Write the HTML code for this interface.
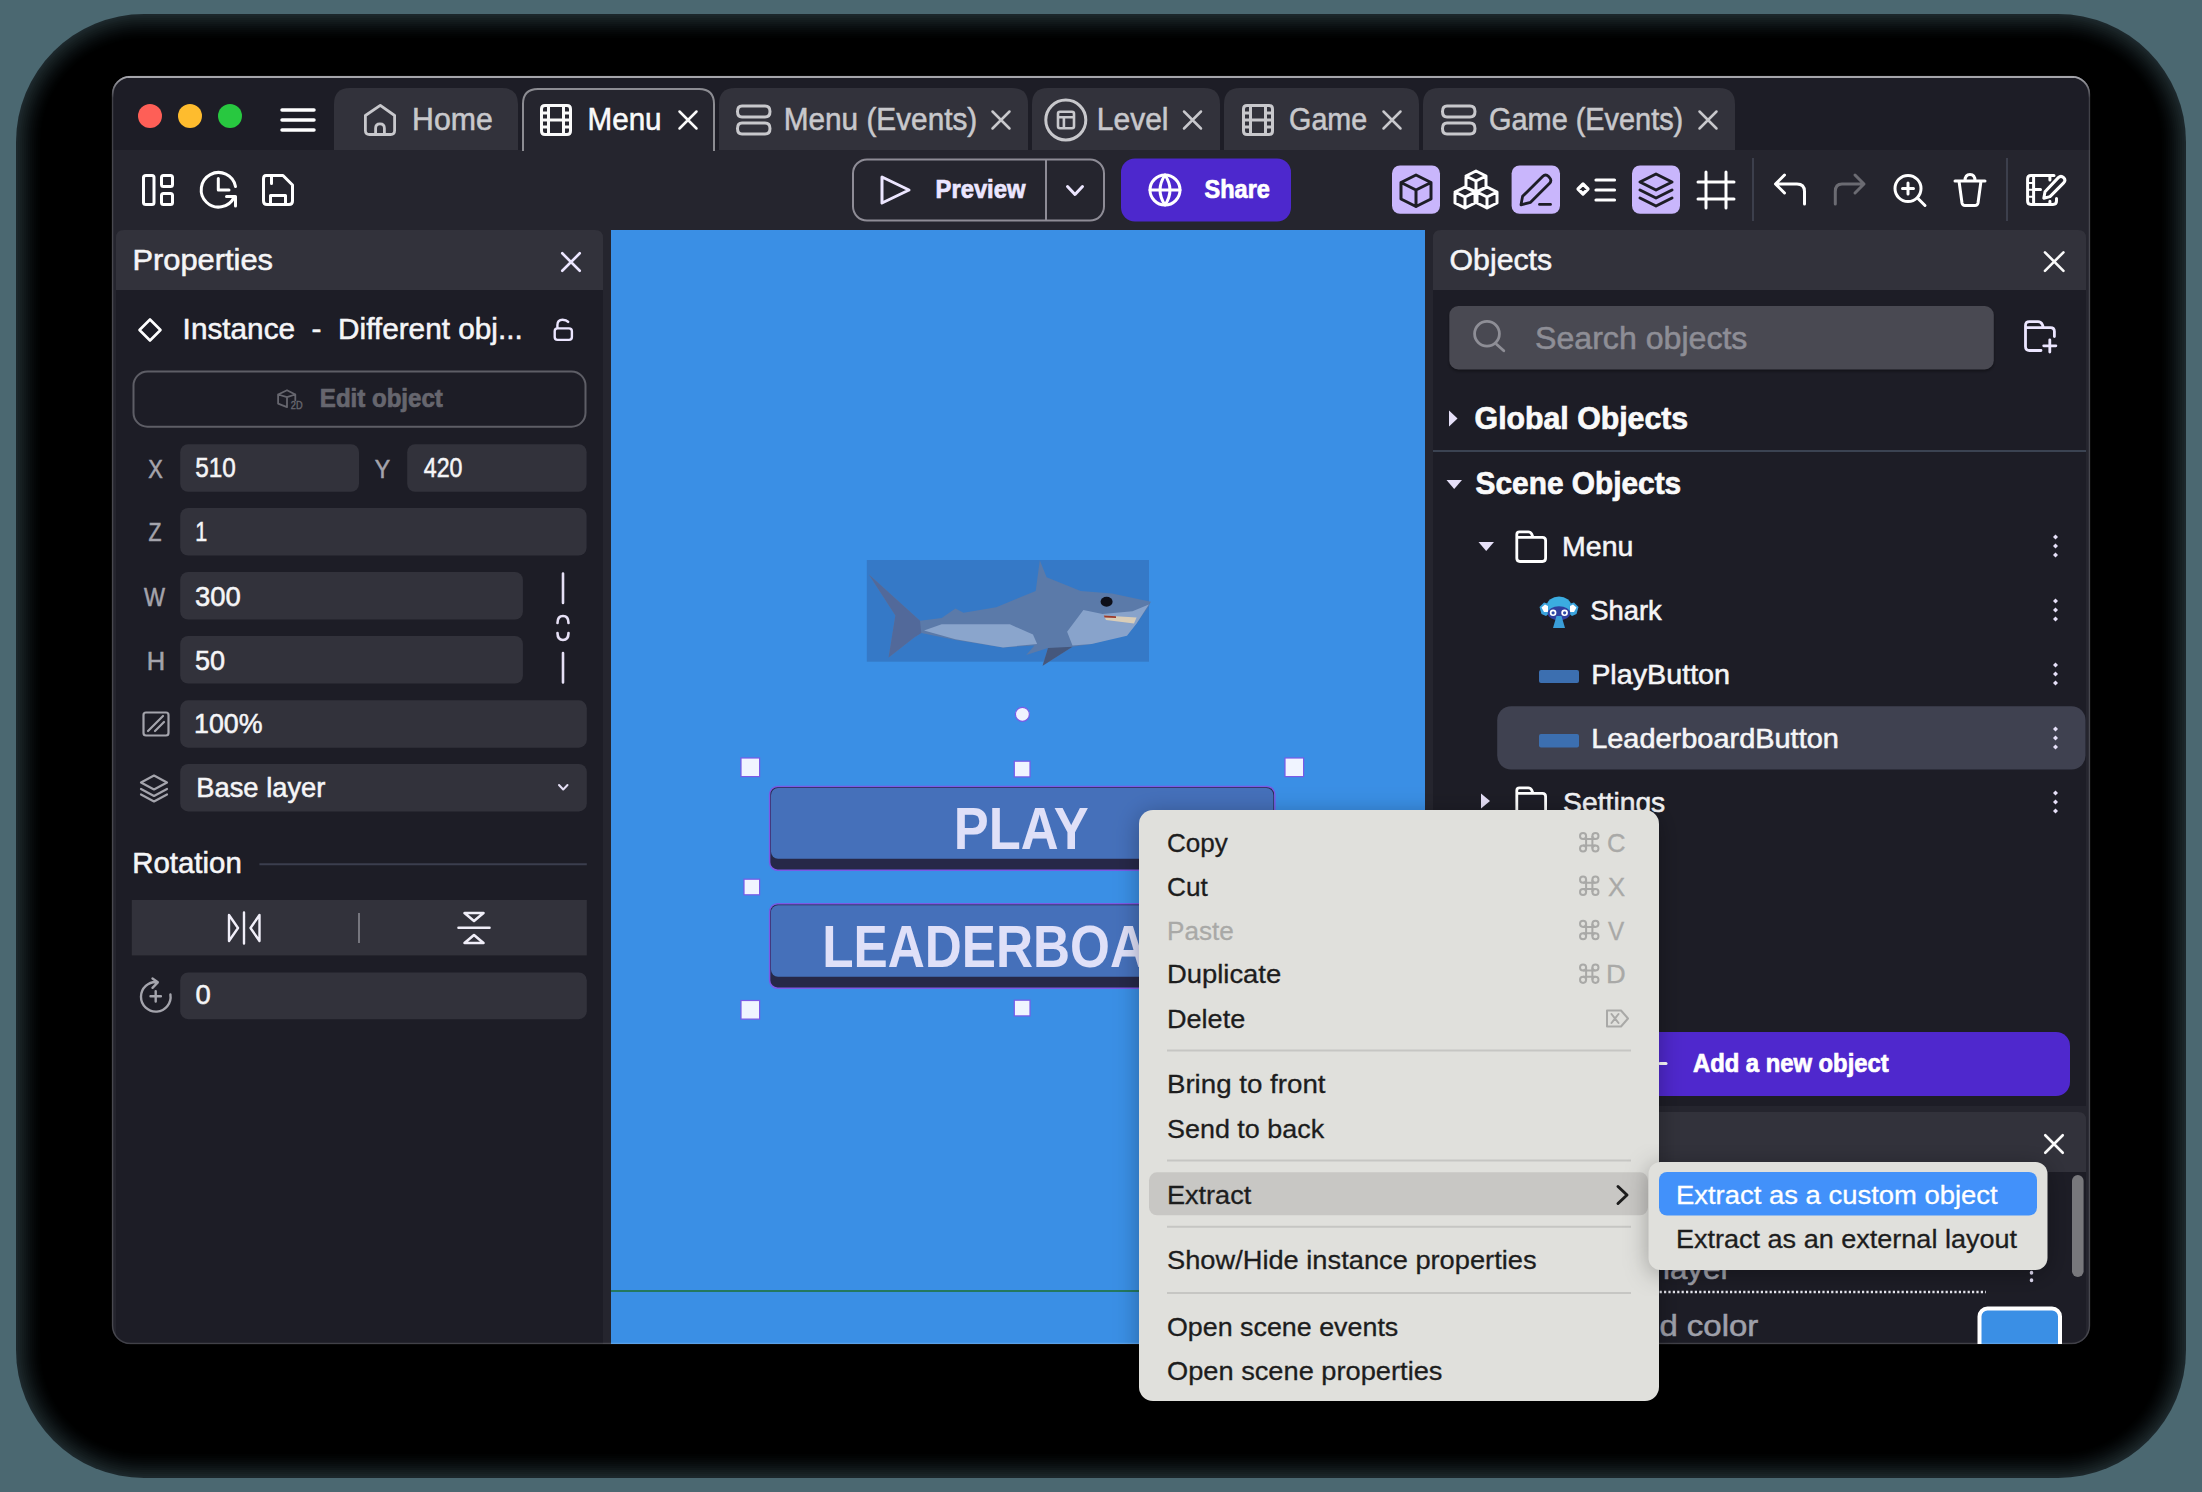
<!DOCTYPE html>
<html><head><meta charset="utf-8"><title>GDevelop</title>
<style>html,body{margin:0;padding:0;background:#4b6871;overflow:hidden;width:2202px;height:1492px} svg{display:block} text{white-space:pre}</style>
</head><body>
<svg width="2202" height="1492" viewBox="0 0 2202 1492">
<rect x="0" y="0" width="2202" height="1492" rx="0" fill="#4b6871" />
<rect x="16" y="14" width="2170" height="1464" rx="128" fill="#000" fill-opacity="0.6200"/>
<rect x="18" y="16" width="2166" height="1460" rx="126" fill="#000" fill-opacity="0.0988"/>
<rect x="20" y="18" width="2162" height="1456" rx="124" fill="#000" fill-opacity="0.1070"/>
<rect x="22" y="20" width="2158" height="1452" rx="122" fill="#000" fill-opacity="0.1165"/>
<rect x="24" y="22" width="2154" height="1448" rx="120" fill="#000" fill-opacity="0.1280"/>
<rect x="26" y="24" width="2150" height="1444" rx="118" fill="#000" fill-opacity="0.1420"/>
<rect x="28" y="26" width="2146" height="1440" rx="116" fill="#000" fill-opacity="0.1594"/>
<rect x="30" y="28" width="2142" height="1436" rx="114" fill="#000" fill-opacity="0.1816"/>
<rect x="32" y="30" width="2138" height="1432" rx="112" fill="#000" fill-opacity="0.2110"/>
<rect x="34" y="32" width="2134" height="1428" rx="110" fill="#000" fill-opacity="0.2518"/>
<rect x="36" y="34" width="2130" height="1424" rx="108" fill="#000" fill-opacity="0.3120"/>
<rect x="38" y="36" width="2126" height="1420" rx="106" fill="#000" fill-opacity="0.4097"/>
<rect x="40" y="38" width="2122" height="1416" rx="104" fill="#000" fill-opacity="0.5939"/>
<rect x="42" y="40" width="2118" height="1412" rx="102" fill="#000" />
<clipPath id="win"><rect x="112" y="76" width="1978" height="1268" rx="18"/></clipPath>
<g clip-path="url(#win)">
<rect x="112" y="76" width="1978" height="1268" rx="0" fill="#25252e" />
<rect x="112" y="76" width="1978" height="74" rx="0" fill="#1d1d26" />
<circle cx="150" cy="116" r="12" fill="#fe5f57"/>
<circle cx="190" cy="116" r="12" fill="#febc2e"/>
<circle cx="230" cy="116" r="12" fill="#28c840"/>
<line x1="282" y1="110" x2="314" y2="110" stroke="#fff" stroke-width="3.5" stroke-linecap="round"/>
<line x1="282" y1="120" x2="314" y2="120" stroke="#fff" stroke-width="3.5" stroke-linecap="round"/>
<line x1="282" y1="130" x2="314" y2="130" stroke="#fff" stroke-width="3.5" stroke-linecap="round"/>
<path d="M334,150 L334,104 Q334,88 350,88 L502,88 Q518,88 518,104 L518,150 Z" fill="#32323b"/>
<path d="M522,150 L522,104 Q522,88 538,88 L699,88 Q715,88 715,104 L715,150 Z" fill="#25252e"/>
<path d="M523,151 L523,104 Q523,89 538,89 L699,89 Q714,89 714,104 L714,151" fill="none" stroke="#8c8c92" stroke-width="2"/>
<path d="M719,150 L719,104 Q719,88 735,88 L1012,88 Q1028,88 1028,104 L1028,150 Z" fill="#32323b"/>
<path d="M1032,150 L1032,104 Q1032,88 1048,88 L1204,88 Q1220,88 1220,104 L1220,150 Z" fill="#32323b"/>
<path d="M1224,150 L1224,104 Q1224,88 1240,88 L1403,88 Q1419,88 1419,104 L1419,150 Z" fill="#32323b"/>
<path d="M1423,150 L1423,104 Q1423,88 1439,88 L1719,88 Q1735,88 1735,104 L1735,150 Z" fill="#32323b"/>
<text x="412.05" y="130" font-family="Liberation Sans" font-size="31" font-weight="normal" fill="#c8c8cc" textLength="80.66" lengthAdjust="spacingAndGlyphs"  stroke="#c8c8cc" stroke-width="0.55">Home</text>
<text x="587.49" y="130" font-family="Liberation Sans" font-size="31" font-weight="normal" fill="#fafafa" textLength="74.10" lengthAdjust="spacingAndGlyphs"  stroke="#fafafa" stroke-width="0.55">Menu</text>
<text x="783.68" y="130" font-family="Liberation Sans" font-size="31" font-weight="normal" fill="#c8c8cc" textLength="193.59" lengthAdjust="spacingAndGlyphs"  stroke="#c8c8cc" stroke-width="0.55">Menu (Events)</text>
<text x="1096.76" y="130" font-family="Liberation Sans" font-size="31" font-weight="normal" fill="#c8c8cc" textLength="71.76" lengthAdjust="spacingAndGlyphs"  stroke="#c8c8cc" stroke-width="0.55">Level</text>
<text x="1289.08" y="130" font-family="Liberation Sans" font-size="31" font-weight="normal" fill="#c8c8cc" textLength="78.07" lengthAdjust="spacingAndGlyphs"  stroke="#c8c8cc" stroke-width="0.55">Game</text>
<text x="1489.07" y="130" font-family="Liberation Sans" font-size="31" font-weight="normal" fill="#c8c8cc" textLength="194.16" lengthAdjust="spacingAndGlyphs"  stroke="#c8c8cc" stroke-width="0.55">Game (Events)</text>
<path d="M679.5,111.5 L696.5,128.5 M696.5,111.5 L679.5,128.5" stroke="#fafafa" stroke-width="2.5" stroke-linecap="round"/>
<path d="M992.5,111.5 L1009.5,128.5 M1009.5,111.5 L992.5,128.5" stroke="#c8c8cc" stroke-width="2.5" stroke-linecap="round"/>
<path d="M1184.0,111.5 L1201.0,128.5 M1201.0,111.5 L1184.0,128.5" stroke="#c8c8cc" stroke-width="2.5" stroke-linecap="round"/>
<path d="M1383.5,111.5 L1400.5,128.5 M1400.5,111.5 L1383.5,128.5" stroke="#c8c8cc" stroke-width="2.5" stroke-linecap="round"/>
<path d="M1699.5,111.5 L1716.5,128.5 M1716.5,111.5 L1699.5,128.5" stroke="#c8c8cc" stroke-width="2.5" stroke-linecap="round"/>
<path d="M365.4,115.5 L380.3,105.4 L394.6,115.5 L394.6,130.5 Q394.6,134.5 390.6,134.5 L369.4,134.5 Q365.4,134.5 365.4,130.5 Z M375.6,134.5 L375.6,128.3 Q375.6,123.8 380,123.8 Q384.4,123.8 384.4,128.3 L384.4,134.5" stroke="#c8c8cc" stroke-width="2.8" fill="none" stroke-linecap="round" stroke-linejoin="round" />
<path d="M545,105.5 L567,105.5 Q570.5,105.5 570.5,109 L570.5,131 Q570.5,134.5 567,134.5 L545,134.5 Q541.5,134.5 541.5,131 L541.5,109 Q541.5,105.5 545,105.5 Z M548.5,105.5 L548.5,134.5 M563.5,105.5 L563.5,134.5 M548.5,120 L563.5,120 M541.5,113 L548.5,113 M541.5,120 L548.5,120 M541.5,127 L548.5,127 M563.5,113 L570.5,113 M563.5,120 L570.5,120 M563.5,127 L570.5,127" stroke="#fafafa" stroke-width="3" fill="none" stroke-linecap="round" stroke-linejoin="round" />
<path d="M1247,105.5 L1269,105.5 Q1272.5,105.5 1272.5,109 L1272.5,131 Q1272.5,134.5 1269,134.5 L1247,134.5 Q1243.5,134.5 1243.5,131 L1243.5,109 Q1243.5,105.5 1247,105.5 Z M1250.5,105.5 L1250.5,134.5 M1265.5,105.5 L1265.5,134.5 M1250.5,120 L1265.5,120 M1243.5,113 L1250.5,113 M1243.5,120 L1250.5,120 M1243.5,127 L1250.5,127 M1265.5,113 L1272.5,113 M1265.5,120 L1272.5,120 M1265.5,127 L1272.5,127" stroke="#c8c8cc" stroke-width="3" fill="none" stroke-linecap="round" stroke-linejoin="round" />
<path d="M742,106 L765,106 Q770,106 770,111.5 Q770,117 765,117 L742,117 Q737.5,117 737.5,111.5 Q737.5,106 742,106 Z M742,123 L765,123 Q770,123 770,128.5 Q770,134 765,134 L742,134 Q737.5,134 737.5,128.5 Q737.5,123 742,123 Z" stroke="#c8c8cc" stroke-width="3" fill="none" stroke-linecap="round" stroke-linejoin="round" />
<path d="M1447,106 L1470,106 Q1475,106 1475,111.5 Q1475,117 1470,117 L1447,117 Q1442.5,117 1442.5,111.5 Q1442.5,106 1447,106 Z M1447,123 L1470,123 Q1475,123 1475,128.5 Q1475,134 1470,134 L1447,134 Q1442.5,134 1442.5,128.5 Q1442.5,123 1447,123 Z" stroke="#c8c8cc" stroke-width="3" fill="none" stroke-linecap="round" stroke-linejoin="round" />
<circle cx="1065.8" cy="120" r="20" fill="none" stroke="#c8c8cc" stroke-width="3"/>
<path d="M1060,111.8 L1072,111.8 Q1074,111.8 1074,113.8 L1074,126.3 Q1074,128.3 1072,128.3 L1060,128.3 Q1058,128.3 1058,126.3 L1058,113.8 Q1058,111.8 1060,111.8 Z M1058,117.3 L1074,117.3 M1063.9,117.3 L1063.9,128.3" stroke="#c8c8cc" stroke-width="2.6" fill="none" stroke-linecap="round" stroke-linejoin="round" />
<path d="M146,175.5 L152,175.5 Q154,175.5 154,177.5 L154,202.5 Q154,204.5 152,204.5 L146,204.5 Q143.5,204.5 143.5,202.5 L143.5,177.5 Q143.5,175.5 146,175.5 Z M163.5,175.5 L170.5,175.5 Q172.5,175.5 172.5,177.5 L172.5,184.5 Q172.5,186.5 170.5,186.5 L163.5,186.5 Q161.5,186.5 161.5,184.5 L161.5,177.5 Q161.5,175.5 163.5,175.5 Z M163.5,193.5 L170.5,193.5 Q172.5,193.5 172.5,195.5 L172.5,202.5 Q172.5,204.5 170.5,204.5 L163.5,204.5 Q161.5,204.5 161.5,202.5 L161.5,195.5 Q161.5,193.5 163.5,193.5 Z" stroke="#fff" stroke-width="3" fill="none" stroke-linecap="round" stroke-linejoin="round" />
<path d="M235.5,186.5 A17.3,17.3 0 1 0 234,197.5 M218.3,178.5 L218.3,190 L229,190 M226.5,196.5 L235.5,196.5 L235.5,206" stroke="#fff" stroke-width="3" fill="none" stroke-linecap="round" stroke-linejoin="round" />
<path d="M266,175.5 L283,175.5 L292.5,185 L292.5,201 Q292.5,204.5 289,204.5 L267,204.5 Q263.5,204.5 263.5,201 L263.5,179 Q263.5,175.5 266,175.5 Z M271.5,175.5 L271.5,183.5 M270.5,204.5 L270.5,195.5 L285.5,195.5 L285.5,204.5" stroke="#fff" stroke-width="3" fill="none" stroke-linecap="round" stroke-linejoin="round" />
<rect x="853" y="159.4" width="251" height="61.2" rx="14" fill="none" stroke="#8e8c96" stroke-width="2"/>
<line x1="1046" y1="159.4" x2="1046" y2="220.6" stroke="#8e8c96" stroke-width="2"/>
<path d="M882,177 L909,190 L882,203 Z" stroke="#ece6ff" stroke-width="3" fill="none" stroke-linecap="round" stroke-linejoin="round" />
<path d="M1067.5,186.5 L1075,194.5 L1082.5,186.5" stroke="#ece6ff" stroke-width="3" fill="none" stroke-linecap="round" stroke-linejoin="round" />
<text x="935.55" y="197.6" font-family="Liberation Sans" font-size="25" font-weight="bold" fill="#ece6ff" textLength="89.92" lengthAdjust="spacingAndGlyphs"  stroke="#ece6ff" stroke-width="0.7">Preview</text>
<rect x="1121" y="158.4" width="170" height="63.2" rx="14" fill="#4d28cd" />
<circle cx="1165" cy="190" r="15" fill="none" stroke="#fff" stroke-width="3"/>
<path d="M1165,175 Q1155,190 1165,205 Q1175,190 1165,175 M1150,190 L1180,190" stroke="#fff" stroke-width="3" fill="none" stroke-linecap="round" stroke-linejoin="round" />
<text x="1204.50" y="197.6" font-family="Liberation Sans" font-size="25" font-weight="bold" fill="#ffffff" textLength="65.41" lengthAdjust="spacingAndGlyphs"  stroke="#ffffff" stroke-width="0.7">Share</text>
<rect x="1392" y="165.5" width="48" height="48.3" rx="8" fill="#c9b6fc" />
<rect x="1511.6" y="165.5" width="48.4" height="48.3" rx="8" fill="#c9b6fc" />
<rect x="1632" y="165.5" width="48" height="48.3" rx="8" fill="#c9b6fc" />
<path d="M1416,175 L1431,182.5 L1431,199 L1416,206.5 L1401,199 L1401,182.5 Z M1401,182.5 L1416,190 L1431,182.5 M1416,190 L1416,206.5" stroke="#1d1d26" stroke-width="3" fill="none" stroke-linecap="round" stroke-linejoin="round" />
<path d="M1476,171 L1486,176 L1486,187 L1476,192 L1466,187 L1466,176 Z M1466,176 L1476,181 L1486,176 M1476,181 L1476,192 M1465,187 L1475,192 L1475,203 L1465,208 L1455,203 L1455,192 Z M1455,192 L1465,197 L1475,192 M1465,197 L1465,208 M1487,187 L1497,192 L1497,203 L1487,208 L1477,203 L1477,192 Z M1477,192 L1487,197 L1497,192 M1487,197 L1487,208" stroke="#fff" stroke-width="3" fill="none" stroke-linecap="round" stroke-linejoin="round" />
<path d="M1542.6,176.6 Q1545.6,173.6 1548.6,176.6 L1549.4,177.4 Q1552.4,180.4 1549.4,183.4 L1530.6,202.3 L1521,204.8 L1522.6,196.3 Z" stroke="#1d1d26" stroke-width="2.8" fill="none" stroke-linecap="round" stroke-linejoin="round" />
<path d="M1539.5,204.4 L1550.5,204.4" stroke="#1d1d26" stroke-width="2.8" fill="none" stroke-linecap="round" stroke-linejoin="round" />
<path d="M1578,189 L1583,184 L1588,189 L1583,194 Z M1596,180 L1614.5,180 M1596,190 L1614.5,190 M1596,200 L1614.5,200" stroke="#fff" stroke-width="3.2" fill="none" stroke-linecap="round" stroke-linejoin="round" />
<path d="M1656,174 L1672,182 L1656,190 L1640,182 Z M1640,190 L1656,198 L1672,190 M1640,198 L1656,206 L1672,198" stroke="#1d1d26" stroke-width="3" fill="none" stroke-linecap="round" stroke-linejoin="round" />
<path d="M1706,172 L1706,208 M1726,172 L1726,208 M1698,182 L1734,182 M1698,199 L1734,199" stroke="#fff" stroke-width="3" fill="none" stroke-linecap="round" stroke-linejoin="round" />
<line x1="1753" y1="158" x2="1753" y2="221" stroke="#3c3f4c" stroke-width="2"/>
<path d="M1784.5,175 L1775.5,184 L1784.5,193 M1776,184 L1797,184 Q1804.5,184 1804.5,191.5 L1804.5,204" stroke="#fff" stroke-width="3" fill="none" stroke-linecap="round" stroke-linejoin="round" />
<path d="M1855,175 L1864,184 L1855,193 M1863.5,184 L1842,184 Q1835.3,184 1835.3,191.5 L1835.3,204" stroke="#6b6b72" stroke-width="3" fill="none" stroke-linecap="round" stroke-linejoin="round" />
<circle cx="1908" cy="188.5" r="13" fill="none" stroke="#fff" stroke-width="3"/>
<path d="M1908,183 L1908,194 M1902.5,188.5 L1913.5,188.5 M1917.5,198 L1925,205.5" stroke="#fff" stroke-width="3" fill="none" stroke-linecap="round" stroke-linejoin="round" />
<path d="M1955,181 L1985,181 M1959,181 L1962,203 Q1962.5,205.5 1965,205.5 L1975,205.5 Q1977.5,205.5 1978,203 L1981,181 M1965,181 Q1965,174.5 1970,174.5 Q1975,174.5 1975,181" stroke="#fff" stroke-width="3" fill="none" stroke-linecap="round" stroke-linejoin="round" />
<line x1="2007" y1="158" x2="2007" y2="221" stroke="#3c3f4c" stroke-width="2"/>
<path d="M2054,175.6 L2031,175.6 Q2027.6,175.6 2027.6,179 L2027.6,201 Q2027.6,204.4 2031,204.4 L2053,204.4 Q2056.5,204.4 2056.5,201 L2056.5,198.5 M2033.6,175.6 L2033.6,204.4 M2033.6,189.4 L2040.5,189.4 M2049.9,175.6 L2049.9,180 M2049.9,201.2 L2049.9,204.4 M2058.3,177.6 Q2061,175 2063.6,177.6 Q2066.2,180.2 2063.6,182.9 L2050,196.6 L2043.8,198.2 L2045,191.8 Z" stroke="#fff" stroke-width="3" fill="none" stroke-linecap="round" stroke-linejoin="round" />
<path d="M2028.5,182.9 L2032.8,182.9 M2028.5,189.8 L2032.8,189.8 M2028.5,196.8 L2032.8,196.8" stroke="#fff" stroke-width="2" fill="none" stroke-linecap="round" stroke-linejoin="round" />
<path d="M116,238 Q116,230 124,230 L595,230 Q603,230 603,238 L603,290 L116,290 Z" fill="#32323b"/>
<rect x="116" y="290" width="487" height="1060" rx="0" fill="#1d1d26" />
<text x="132.44" y="270.1" font-family="Liberation Sans" font-size="30" font-weight="normal" fill="#f5f5f7" textLength="140.58" lengthAdjust="spacingAndGlyphs"  stroke="#f5f5f7" stroke-width="0.55">Properties</text>
<path d="M562.25,253.25 L579.75,270.75 M579.75,253.25 L562.25,270.75" stroke="#ece6ff" stroke-width="2.6" stroke-linecap="round"/>
<path d="M150,319.5 L160.5,330 L150,340.5 L139.5,330 Z" stroke="#fff" stroke-width="2.6" fill="none" stroke-linecap="round" stroke-linejoin="round" />
<text x="182.62" y="339.2" font-family="Liberation Sans" font-size="30" font-weight="normal" fill="#f5f5f7" textLength="340.10" lengthAdjust="spacingAndGlyphs"  stroke="#f5f5f7" stroke-width="0.55">Instance  -  Different obj...</text>
<path d="M557.5,328.4 L569,328.4 Q571.9,328.4 571.9,331.3 L571.9,337 Q571.9,339.9 569,339.9 L557.5,339.9 Q554.7,339.9 554.7,337 L554.7,331.3 Q554.7,328.4 557.5,328.4 Z M557.4,328.4 L557.4,325 Q557.4,319.7 562.6,319.7 Q566.3,319.7 568.2,321.9" stroke="#ece6ff" stroke-width="2.4" fill="none" stroke-linecap="round" stroke-linejoin="round" />
<rect x="133.5" y="371.5" width="452" height="55.2" rx="14" fill="none" stroke="#5e5e66" stroke-width="2"/>
<path d="M295.3,400.4 L295.3,394.5 L287,390.2 L278.1,394.5 L278.1,403.6 L287,407.1 L287,397.2 L278.1,394.5 M287,397.2 L295.3,394.5" stroke="#66666e" stroke-width="1.8" fill="none" stroke-linecap="round" stroke-linejoin="round" />
<text x="290.80" y="409.2" font-family="Liberation Sans" font-size="10" font-weight="normal" fill="#66666e" textLength="11.70" lengthAdjust="spacingAndGlyphs"  stroke="#66666e" stroke-width="0.4">2D</text>
<text x="319.84" y="406.8" font-family="Liberation Sans" font-size="25" font-weight="bold" fill="#66666e" textLength="123.01" lengthAdjust="spacingAndGlyphs"  stroke="#66666e" stroke-width="0.7">Edit object</text>
<rect x="180.2" y="444.2" width="178.8" height="47.6" rx="8" fill="#32323b" />
<rect x="407.2" y="444.2" width="179.4" height="47.6" rx="8" fill="#32323b" />
<rect x="180.2" y="508" width="406.4" height="47.6" rx="8" fill="#32323b" />
<rect x="180.2" y="572" width="342.7" height="47.6" rx="8" fill="#32323b" />
<rect x="180.2" y="636" width="342.7" height="47.6" rx="8" fill="#32323b" />
<rect x="180.2" y="700.3" width="406.6" height="47.4" rx="8" fill="#32323b" />
<rect x="180.2" y="764" width="406.6" height="47.4" rx="8" fill="#32323b" />
<rect x="180.2" y="972.4" width="406.6" height="46.8" rx="8" fill="#32323b" />
<text x="148.30" y="477.5" font-family="Liberation Sans" font-size="26" font-weight="normal" fill="#a4a4ac" textLength="14.59" lengthAdjust="spacingAndGlyphs"  stroke="#a4a4ac" stroke-width="0.55">X</text>
<text x="195.33" y="477.2" font-family="Liberation Sans" font-size="28" font-weight="normal" fill="#f5f5f7" textLength="40.57" lengthAdjust="spacingAndGlyphs"  stroke="#f5f5f7" stroke-width="0.55">510</text>
<text x="374.70" y="477.5" font-family="Liberation Sans" font-size="26" font-weight="normal" fill="#a4a4ac" textLength="15.40" lengthAdjust="spacingAndGlyphs"  stroke="#a4a4ac" stroke-width="0.55">Y</text>
<text x="423.80" y="477.2" font-family="Liberation Sans" font-size="28" font-weight="normal" fill="#f5f5f7" textLength="38.67" lengthAdjust="spacingAndGlyphs"  stroke="#f5f5f7" stroke-width="0.55">420</text>
<text x="148.60" y="540.7" font-family="Liberation Sans" font-size="26" font-weight="normal" fill="#a4a4ac" textLength="13.00" lengthAdjust="spacingAndGlyphs"  stroke="#a4a4ac" stroke-width="0.55">Z</text>
<text x="195.16" y="540.7" font-family="Liberation Sans" font-size="28" font-weight="normal" fill="#f5f5f7" textLength="11.98" lengthAdjust="spacingAndGlyphs"  stroke="#f5f5f7" stroke-width="0.55">1</text>
<text x="144.00" y="605.6" font-family="Liberation Sans" font-size="26" font-weight="normal" fill="#a4a4ac" textLength="21.01" lengthAdjust="spacingAndGlyphs"  stroke="#a4a4ac" stroke-width="0.55">W</text>
<text x="194.92" y="605.6" font-family="Liberation Sans" font-size="28" font-weight="normal" fill="#f5f5f7" textLength="45.74" lengthAdjust="spacingAndGlyphs"  stroke="#f5f5f7" stroke-width="0.55">300</text>
<text x="146.84" y="669.7" font-family="Liberation Sans" font-size="26" font-weight="normal" fill="#a4a4ac" textLength="18.40" lengthAdjust="spacingAndGlyphs"  stroke="#a4a4ac" stroke-width="0.55">H</text>
<text x="195.03" y="669.7" font-family="Liberation Sans" font-size="28" font-weight="normal" fill="#f5f5f7" textLength="30.12" lengthAdjust="spacingAndGlyphs"  stroke="#f5f5f7" stroke-width="0.55">50</text>
<text x="194.09" y="732.8" font-family="Liberation Sans" font-size="28" font-weight="normal" fill="#f5f5f7" textLength="68.47" lengthAdjust="spacingAndGlyphs"  stroke="#f5f5f7" stroke-width="0.55">100%</text>
<text x="196.28" y="797" font-family="Liberation Sans" font-size="28.5" font-weight="normal" fill="#f5f5f7" textLength="129.13" lengthAdjust="spacingAndGlyphs"  stroke="#f5f5f7" stroke-width="0.55">Base layer</text>
<text x="195.52" y="1004.4" font-family="Liberation Sans" font-size="28" font-weight="normal" fill="#f5f5f7" textLength="15.24" lengthAdjust="spacingAndGlyphs"  stroke="#f5f5f7" stroke-width="0.55">0</text>
<path d="M563,573.5 L563,603 M563,653 L563,682.5" stroke="#e6e0f5" stroke-width="2.6" fill="none" stroke-linecap="round" stroke-linejoin="round" />
<path d="M557.5,623 Q557.5,616 563,616 Q568.5,616 568.5,623 M557.5,633 Q557.5,640 563,640 Q568.5,640 568.5,633" stroke="#e6e0f5" stroke-width="2.6" fill="none" stroke-linecap="round" stroke-linejoin="round" />
<path d="M146,712.5 L166,712.5 Q168.5,712.5 168.5,715 L168.5,733 Q168.5,735.5 166,735.5 L146,735.5 Q143.5,735.5 143.5,733 L143.5,715 Q143.5,712.5 146,712.5 Z M148,731 L163,716 M155,731 L164,722" stroke="#a4a4ac" stroke-width="2.2" fill="none" stroke-linecap="round" stroke-linejoin="round" />
<path d="M154,775.5 L167,782.5 L154,789.5 L141,782.5 Z M141,789 L154,796 L167,789 M141,794.5 L154,801.5 L167,794.5" stroke="#a4a4ac" stroke-width="2.2" fill="none" stroke-linecap="round" stroke-linejoin="round" />
<path d="M559,785 L563.2,789.5 L567.5,785" stroke="#e6e0f5" stroke-width="2" fill="none" stroke-linecap="round" stroke-linejoin="round" />
<text x="132.27" y="873" font-family="Liberation Sans" font-size="29" font-weight="normal" fill="#f5f5f7" textLength="109.47" lengthAdjust="spacingAndGlyphs"  stroke="#f5f5f7" stroke-width="0.55">Rotation</text>
<line x1="259.4" y1="864.3" x2="586.8" y2="864.3" stroke="#3b3e4e" stroke-width="2"/>
<rect x="131.8" y="900" width="455" height="55.4" rx="0" fill="#32323b" />
<line x1="359" y1="913" x2="359" y2="943" stroke="#76767e" stroke-width="2"/>
<path d="M229,915 L238,928 L229,941 Z M244,912.5 L244,943.5 M259.5,915 L250.5,928 L259.5,941 Z" stroke="#f0eef8" stroke-width="2.4" fill="none" stroke-linecap="round" stroke-linejoin="round" />
<path d="M464.5,913 L483.5,913 L474,921 Z M458.5,927.7 L489.5,927.7 M464.5,943 L483.5,943 L474,935 Z" stroke="#f0eef8" stroke-width="2.6" fill="none" stroke-linecap="round" stroke-linejoin="round" />
<path d="M170.4,994.5 A14.8,14.8 0 1 1 157,982.1 M152.5,978.5 L157.8,982.3 L152.5,987.8 M150.5,996.3 L160.9,996.3 M155.7,991.1 L155.7,1001.5" stroke="#a4a4ac" stroke-width="2.4" fill="none" stroke-linecap="round" stroke-linejoin="round" />
<rect x="611" y="230" width="814" height="1114" rx="0" fill="#3a8fe5" />
<rect x="866.8" y="560" width="282.2" height="101.7" rx="0" fill="#3579c7" />
<line x1="611" y1="1291" x2="1425" y2="1291" stroke="#24785f" stroke-width="2.2"/>
<rect x="769.6" y="786.4" width="505.19999999999993" height="83.80000000000007" rx="8" fill="#262848"/>
<rect x="771" y="787.9" width="502.4" height="70.80000000000007" rx="7" fill="#4570ba"/>
<rect x="769.6" y="786.4" width="505.19999999999993" height="83.80000000000007" rx="8" fill="none" stroke="#7a5ae6" stroke-width="1.5"/>
<rect x="769.6" y="903.7" width="505.19999999999993" height="84.5" rx="8" fill="#262848"/>
<rect x="771" y="905.2" width="502.4" height="71.5" rx="7" fill="#4570ba"/>
<rect x="769.6" y="903.7" width="505.19999999999993" height="84.5" rx="8" fill="none" stroke="#7a5ae6" stroke-width="1.5"/>
<text x="953.81" y="849" font-family="Liberation Sans" font-size="60" font-weight="bold" fill="#dfe0f8" textLength="134.91" lengthAdjust="spacingAndGlyphs" >PLAY</text>
<text x="822.18" y="967.4" font-family="Liberation Sans" font-size="60" font-weight="bold" fill="#dfe0f8" textLength="398.81" lengthAdjust="spacingAndGlyphs" >LEADERBOARD</text>
<rect x="741" y="758" width="18.6" height="18.6" fill="#f0f4ff" stroke="#7a5ae6" stroke-width="1.2"/>
<rect x="1014.3" y="761.2" width="15.7" height="15.7" fill="#f0f4ff" stroke="#7a5ae6" stroke-width="1.2"/>
<rect x="1285" y="758" width="18.6" height="18.6" fill="#f0f4ff" stroke="#7a5ae6" stroke-width="1.2"/>
<rect x="744" y="879.2" width="15.6" height="15.6" fill="#f0f4ff" stroke="#7a5ae6" stroke-width="1.2"/>
<rect x="741" y="1000.5" width="18.6" height="18.6" fill="#f0f4ff" stroke="#7a5ae6" stroke-width="1.2"/>
<rect x="1014.3" y="1000.2" width="15.7" height="15.7" fill="#f0f4ff" stroke="#7a5ae6" stroke-width="1.2"/>
<circle cx="1022.4" cy="714.3" r="7" fill="#f0f4ff" stroke="#7a5ae6" stroke-width="1.2"/>
<path d="M868.9,574.5 L920,620.8 L941.7,618.1 L955.4,608.6 L963.5,612.7 L996.2,607.2 L1035.7,590.9 L1039.8,560.2 L1046.6,577.2 L1080.7,590.9 L1112,593.6 L1150.9,601.8 L1148.8,605.9 L1136.6,623.6 L1127,634.5 L1091.6,644 L1072.5,646.7 L1042.6,665.8 L1048,648.1 L1026.2,654.9 L1034.4,645.4 L1003,647.4 L955.4,640 L921.3,633.1 L914.5,637.2 L888.6,657.6 L895.4,615.4 Z" fill="#5b7aa9"/>
<path d="M868.9,574.5 L920,620.8 L921.3,633.1 L914.5,637.2 L888.6,657.6 L895.4,615.4 Z" fill="#52699a"/>
<path d="M924,630.4 L941.7,624.3 L1009.9,624.3 L1033,634.5 L1037.1,644 L1003,647.4 L955.4,639.2 Z" fill="#8aa5cc"/>
<path d="M1067.1,631.7 L1083.4,610 L1102.5,614 L1132.5,611.3 L1148.8,604.5 L1136.6,623.6 L1127,635.8 L1091.6,644 L1072.5,645.4 Z" fill="#88a3cb"/>
<path d="M1048,648.1 L1072.5,646.7 L1042.6,665.8 Z" fill="#45577c"/>
<path d="M1103.9,615.6 L1136.6,617.5 L1134,623.6 L1106,620 Z" fill="#d9cdb8"/>
<path d="M1103.9,615.4 L1116,616.2 L1116,618 L1104.5,617.5 Z" fill="#9a3a2c"/>
<ellipse cx="1106.6" cy="601.8" rx="6" ry="5" fill="#0d0f1a"/>
<path d="M1433,238 Q1433,230 1441,230 L2078,230 Q2086,230 2086,238 L2086,290 L1433,290 Z" fill="#32323b"/>
<rect x="1433" y="290" width="653" height="816" rx="0" fill="#1d1d26" />
<text x="1449.59" y="270.3" font-family="Liberation Sans" font-size="30" font-weight="normal" fill="#f5f5f7" textLength="102.52" lengthAdjust="spacingAndGlyphs"  stroke="#f5f5f7" stroke-width="0.55">Objects</text>
<path d="M2044.9499999999998,252.35000000000002 L2063.45,270.85 M2063.45,252.35000000000002 L2044.9499999999998,270.85" stroke="#fafafa" stroke-width="2.6" stroke-linecap="round"/>
<rect x="1449.3" y="308" width="544.5" height="63.5" rx="9" fill="#000" fill-opacity="0.35" filter="url(#sb)"/>
<filter id="sb" x="-5%" y="-20%" width="110%" height="140%"><feGaussianBlur stdDeviation="1.5"/></filter>
<rect x="1449.3" y="306" width="544.5" height="63.5" rx="9" fill="#494952" />
<circle cx="1487" cy="333.7" r="12.4" fill="none" stroke="#8e8e96" stroke-width="2.8"/>
<path d="M1496.5,344.2 L1503.8,350.8" stroke="#8e8e96" stroke-width="2.8" fill="none" stroke-linecap="round" stroke-linejoin="round" />
<text x="1535.00" y="349.1" font-family="Liberation Sans" font-size="32" font-weight="normal" fill="#8e8e96" textLength="212.41" lengthAdjust="spacingAndGlyphs"  stroke="#8e8e96" stroke-width="0.55">Search objects</text>
<path d="M2041,350.5 L2029.5,350.5 Q2025.5,350.5 2025.5,346.5 L2025.5,325.5 Q2025.5,321.7 2029.5,321.7 L2038,321.7 Q2041,321.7 2042.3,324.6 L2043.5,327.7 L2050.5,327.7 Q2054.4,327.7 2054.4,331.6 L2054.4,336.6 M2025.5,327.7 L2043.5,327.7 M2049.8,339.8 L2049.8,352 M2043.7,345.8 L2055.9,345.8" stroke="#ece6ff" stroke-width="2.8" fill="none" stroke-linecap="round" stroke-linejoin="round" />
<path d="M1449,410.5 L1457.5,418.5 L1449,426.5 Z" fill="#e6e0f8"/>
<text x="1474.62" y="428.8" font-family="Liberation Sans" font-size="31" font-weight="bold" fill="#fafafa" textLength="213.59" lengthAdjust="spacingAndGlyphs"  stroke="#fafafa" stroke-width="0.7">Global Objects</text>
<line x1="1433" y1="451" x2="2086" y2="451" stroke="#3b4352" stroke-width="2.2"/>
<path d="M1446.5,480 L1462,480 L1454.2,489 Z" fill="#e6e0f8"/>
<text x="1475.60" y="493.7" font-family="Liberation Sans" font-size="31" font-weight="bold" fill="#fafafa" textLength="205.59" lengthAdjust="spacingAndGlyphs"  stroke="#fafafa" stroke-width="0.7">Scene Objects</text>
<path d="M1478.5,542 L1494,542 L1486.2,551 Z" fill="#e6e0f8"/>
<path d="M1516.8,537.5 L1516.8,534.5 Q1516.8,531.8 1519.5,531.8 L1528.3,531.8 Q1530.6,531.8 1531.6,533.9 L1533,537.3 L1542.4,537.3 Q1545.6,537.3 1545.6,540.5 L1545.6,558.3 Q1545.6,561.5 1542.4,561.5 L1520,561.5 Q1516.8,561.5 1516.8,558.3 Z M1516.8,537.3 L1533,537.3" stroke="#fff" stroke-width="2.8" fill="none" stroke-linecap="round" stroke-linejoin="round" />
<text x="1562.10" y="556" font-family="Liberation Sans" font-size="28.5" font-weight="normal" fill="#f5f5f7" textLength="71.25" lengthAdjust="spacingAndGlyphs"  stroke="#f5f5f7" stroke-width="0.55">Menu</text>
<ellipse cx="1559" cy="606" rx="12.2" ry="9.5" fill="#3bace0"/>
<path d="M1539.5,607 L1544,602.5 L1549,604 L1549.5,613 L1546,616 L1541.5,614 Z M1578.5,607 L1574,602.5 L1569,604 L1568.5,613 L1572,616 L1576.5,614 Z" fill="#3aa3dc"/>
<path d="M1541.5,607.5 L1545,604.5 L1548,606 L1548,612 L1544,612 Z M1576.5,607.5 L1573,604.5 L1570,606 L1570,612 L1574,612 Z" fill="#ffffff"/>
<ellipse cx="1559" cy="613.3" rx="11.3" ry="7" fill="#2f3f9e"/>
<path d="M1556.5,616 L1561.5,616 L1565,628 L1553,628 Z" fill="#3a9ed8"/>
<circle cx="1553.1" cy="612.8" r="3.3" fill="#ffffff"/><circle cx="1564.6" cy="612.8" r="3.3" fill="#ffffff"/>
<circle cx="1553.1" cy="612.8" r="1.6" fill="#2f4aa8"/><circle cx="1564.6" cy="612.8" r="1.6" fill="#2f4aa8"/>
<text x="1590.24" y="620" font-family="Liberation Sans" font-size="28.5" font-weight="normal" fill="#f5f5f7" textLength="71.44" lengthAdjust="spacingAndGlyphs"  stroke="#f5f5f7" stroke-width="0.55">Shark</text>
<rect x="1539" y="670" width="40" height="13" rx="2" fill="#3c6fb0" />
<text x="1591.18" y="684" font-family="Liberation Sans" font-size="28.5" font-weight="normal" fill="#f5f5f7" textLength="138.88" lengthAdjust="spacingAndGlyphs"  stroke="#f5f5f7" stroke-width="0.55">PlayButton</text>
<rect x="1497.2" y="706.2" width="588.3" height="63.3" rx="14" fill="#3f4150" />
<rect x="1539" y="734" width="40" height="13.6" rx="2" fill="#3c6fb0" />
<text x="1591.17" y="748" font-family="Liberation Sans" font-size="28.5" font-weight="normal" fill="#f5f5f7" textLength="247.71" lengthAdjust="spacingAndGlyphs"  stroke="#f5f5f7" stroke-width="0.55">LeaderboardButton</text>
<path d="M1481,793.5 L1490,801 L1481,808.5 Z" fill="#e6e0f8"/>
<path d="M1516.8,793.5 L1516.8,790.5 Q1516.8,787.8 1519.5,787.8 L1528.3,787.8 Q1530.6,787.8 1531.6,789.9 L1533,793.3 L1542.4,793.3 Q1545.6,793.3 1545.6,796.5 L1545.6,814.3 Q1545.6,817.5 1542.4,817.5 L1520,817.5 Q1516.8,817.5 1516.8,814.3 Z M1516.8,793.3 L1533,793.3" stroke="#fff" stroke-width="2.8" fill="none" stroke-linecap="round" stroke-linejoin="round" />
<text x="1563.11" y="812" font-family="Liberation Sans" font-size="28.5" font-weight="normal" fill="#f5f5f7" textLength="102.14" lengthAdjust="spacingAndGlyphs"  stroke="#f5f5f7" stroke-width="0.55">Settings</text>
<path d="M2055.5,534.5 L2058,537 L2055.5,539.5 L2053,537 Z" fill="#e6e0f8"/>
<path d="M2055.5,543.5 L2058,546 L2055.5,548.5 L2053,546 Z" fill="#e6e0f8"/>
<path d="M2055.5,552.5 L2058,555 L2055.5,557.5 L2053,555 Z" fill="#e6e0f8"/>
<path d="M2055.5,598.5 L2058,601 L2055.5,603.5 L2053,601 Z" fill="#e6e0f8"/>
<path d="M2055.5,607.5 L2058,610 L2055.5,612.5 L2053,610 Z" fill="#e6e0f8"/>
<path d="M2055.5,616.5 L2058,619 L2055.5,621.5 L2053,619 Z" fill="#e6e0f8"/>
<path d="M2055.5,662.5 L2058,665 L2055.5,667.5 L2053,665 Z" fill="#e6e0f8"/>
<path d="M2055.5,671.5 L2058,674 L2055.5,676.5 L2053,674 Z" fill="#e6e0f8"/>
<path d="M2055.5,680.5 L2058,683 L2055.5,685.5 L2053,683 Z" fill="#e6e0f8"/>
<path d="M2055.5,726.5 L2058,729 L2055.5,731.5 L2053,729 Z" fill="#e6e0f8"/>
<path d="M2055.5,735.5 L2058,738 L2055.5,740.5 L2053,738 Z" fill="#e6e0f8"/>
<path d="M2055.5,744.5 L2058,747 L2055.5,749.5 L2053,747 Z" fill="#e6e0f8"/>
<path d="M2055.5,790.5 L2058,793 L2055.5,795.5 L2053,793 Z" fill="#e6e0f8"/>
<path d="M2055.5,799.5 L2058,802 L2055.5,804.5 L2053,802 Z" fill="#e6e0f8"/>
<path d="M2055.5,808.5 L2058,811 L2055.5,813.5 L2053,811 Z" fill="#e6e0f8"/>
<rect x="1640" y="1032" width="430" height="64" rx="14" fill="#4f28cd" />
<text x="1693.00" y="1072" font-family="Liberation Sans" font-size="25" font-weight="bold" fill="#ffffff" textLength="195.66" lengthAdjust="spacingAndGlyphs"  stroke="#ffffff" stroke-width="0.7">Add a new object</text>
<path d="M1660,1063.5 L1666,1063.5" stroke="#fff" stroke-width="3" fill="none" stroke-linecap="round" stroke-linejoin="round" />
<path d="M1433,1120 Q1433,1112 1441,1112 L2078,1112 Q2086,1112 2086,1120 L2086,1172 L1433,1172 Z" fill="#32323b"/>
<rect x="1433" y="1172" width="653" height="180" rx="0" fill="#1d1d26" />
<path d="M2045.25,1135.25 L2062.75,1152.75 M2062.75,1135.25 L2045.25,1152.75" stroke="#fafafa" stroke-width="2.6" stroke-linecap="round"/>
<rect x="2072" y="1175" width="11.6" height="102" rx="5.8" fill="#78787c" />
<text x="1662.91" y="1278.7" font-family="Liberation Sans" font-size="30" font-weight="normal" fill="#9fa0aa" textLength="68.08" lengthAdjust="spacingAndGlyphs"  stroke="#9fa0aa" stroke-width="0.55">layer</text>
<line x1="1642" y1="1292" x2="1986" y2="1292" stroke="#e8e8f0" stroke-width="2.5" stroke-dasharray="2.2 2.2"/>
<path d="M2031.5,1272.5 L2031.5,1273 M2031.5,1280 L2031.5,1280.5" stroke="#e6e0f8" stroke-width="3.5" fill="none" stroke-linecap="round" stroke-linejoin="round" />
<text x="1659.40" y="1335.5" font-family="Liberation Sans" font-size="30" font-weight="normal" fill="#9fa0aa" textLength="98.89" lengthAdjust="spacingAndGlyphs"  stroke="#9fa0aa" stroke-width="0.55">d color</text>
<rect x="1979.5" y="1308.5" width="80.5" height="60" rx="8" fill="#3a8fe5" stroke="#ffffff" stroke-width="4"/>
</g>
<rect x="112.5" y="76.5" width="1977" height="1267" rx="18" fill="none" stroke="#ffffff" stroke-opacity="0.16" stroke-width="1.5"/>
<linearGradient id="tb" x1="0" y1="0" x2="0" y2="1"><stop offset="0" stop-color="#a8a8ae"/><stop offset="1" stop-color="#a8a8ae" stop-opacity="0"/></linearGradient>
<path d="M112.8,98 L112.8,94 A17.2,17.2 0 0 1 130,76.8 L2072,76.8 A17.2,17.2 0 0 1 2089.2,94 L2089.2,98" fill="none" stroke="url(#tb)" stroke-width="1.8"/>
<line x1="128" y1="77" x2="2074" y2="77" stroke="#a5a5ab" stroke-width="2"/>
<rect x="1139" y="814" width="520" height="591" rx="14" fill="#000" fill-opacity="0.3" filter="url(#msh)"/>
<filter id="msh" x="-20%" y="-20%" width="140%" height="140%"><feGaussianBlur stdDeviation="12"/></filter>
<rect x="1139" y="810" width="520" height="591" rx="14" fill="#e0e0dc" />
<text x="1167.02" y="852" font-family="Liberation Sans" font-size="26.5" font-weight="normal" fill="#1d1d1d" textLength="60.85" lengthAdjust="spacingAndGlyphs"  stroke="#1d1d1d" stroke-width="0.3">Copy</text>
<text x="1167.01" y="895.6" font-family="Liberation Sans" font-size="26.5" font-weight="normal" fill="#1d1d1d" textLength="40.86" lengthAdjust="spacingAndGlyphs"  stroke="#1d1d1d" stroke-width="0.3">Cut</text>
<text x="1167.03" y="939.8" font-family="Liberation Sans" font-size="26.5" font-weight="normal" fill="#a9a9a7" textLength="66.69" lengthAdjust="spacingAndGlyphs"  stroke="#a9a9a7" stroke-width="0.3">Paste</text>
<text x="1166.93" y="983.4" font-family="Liberation Sans" font-size="26.5" font-weight="normal" fill="#1d1d1d" textLength="114.33" lengthAdjust="spacingAndGlyphs"  stroke="#1d1d1d" stroke-width="0.3">Duplicate</text>
<text x="1166.96" y="1027.6" font-family="Liberation Sans" font-size="26.5" font-weight="normal" fill="#1d1d1d" textLength="78.30" lengthAdjust="spacingAndGlyphs"  stroke="#1d1d1d" stroke-width="0.3">Delete</text>
<path d="M1583.0525,839.105 L1595.4475,839.105 M1583.0525,845.395 L1595.4475,845.395 M1586.105,836.0525 L1586.105,848.4475 M1592.395,836.0525 L1592.395,848.4475" stroke="#a9a9a7" stroke-width="2.0" fill="none"/>
<circle cx="1583.05" cy="836.05" r="3.05" fill="none" stroke="#a9a9a7" stroke-width="2.0"/>
<circle cx="1595.45" cy="836.05" r="3.05" fill="none" stroke="#a9a9a7" stroke-width="2.0"/>
<circle cx="1583.05" cy="848.45" r="3.05" fill="none" stroke="#a9a9a7" stroke-width="2.0"/>
<circle cx="1595.45" cy="848.45" r="3.05" fill="none" stroke="#a9a9a7" stroke-width="2.0"/>
<text x="1607.01" y="852" font-family="Liberation Sans" font-size="26" font-weight="normal" fill="#a9a9a7" textLength="18.56" lengthAdjust="spacingAndGlyphs"  stroke="#a9a9a7" stroke-width="0.3">C</text>
<path d="M1583.0525,882.705 L1595.4475,882.705 M1583.0525,888.995 L1595.4475,888.995 M1586.105,879.6525 L1586.105,892.0475 M1592.395,879.6525 L1592.395,892.0475" stroke="#a9a9a7" stroke-width="2.0" fill="none"/>
<circle cx="1583.05" cy="879.65" r="3.05" fill="none" stroke="#a9a9a7" stroke-width="2.0"/>
<circle cx="1595.45" cy="879.65" r="3.05" fill="none" stroke="#a9a9a7" stroke-width="2.0"/>
<circle cx="1583.05" cy="892.05" r="3.05" fill="none" stroke="#a9a9a7" stroke-width="2.0"/>
<circle cx="1595.45" cy="892.05" r="3.05" fill="none" stroke="#a9a9a7" stroke-width="2.0"/>
<text x="1608.00" y="895.6" font-family="Liberation Sans" font-size="26" font-weight="normal" fill="#a9a9a7" textLength="17.14" lengthAdjust="spacingAndGlyphs"  stroke="#a9a9a7" stroke-width="0.3">X</text>
<path d="M1583.0525,926.905 L1595.4475,926.905 M1583.0525,933.1949999999999 L1595.4475,933.1949999999999 M1586.105,923.8525 L1586.105,936.2475 M1592.395,923.8525 L1592.395,936.2475" stroke="#a9a9a7" stroke-width="2.0" fill="none"/>
<circle cx="1583.05" cy="923.85" r="3.05" fill="none" stroke="#a9a9a7" stroke-width="2.0"/>
<circle cx="1595.45" cy="923.85" r="3.05" fill="none" stroke="#a9a9a7" stroke-width="2.0"/>
<circle cx="1583.05" cy="936.25" r="3.05" fill="none" stroke="#a9a9a7" stroke-width="2.0"/>
<circle cx="1595.45" cy="936.25" r="3.05" fill="none" stroke="#a9a9a7" stroke-width="2.0"/>
<text x="1608.00" y="939.8" font-family="Liberation Sans" font-size="26" font-weight="normal" fill="#a9a9a7" textLength="16.19" lengthAdjust="spacingAndGlyphs"  stroke="#a9a9a7" stroke-width="0.3">V</text>
<path d="M1583.0525,970.505 L1595.4475,970.505 M1583.0525,976.795 L1595.4475,976.795 M1586.105,967.4525 L1586.105,979.8475 M1592.395,967.4525 L1592.395,979.8475" stroke="#a9a9a7" stroke-width="2.0" fill="none"/>
<circle cx="1583.05" cy="967.45" r="3.05" fill="none" stroke="#a9a9a7" stroke-width="2.0"/>
<circle cx="1595.45" cy="967.45" r="3.05" fill="none" stroke="#a9a9a7" stroke-width="2.0"/>
<circle cx="1583.05" cy="979.85" r="3.05" fill="none" stroke="#a9a9a7" stroke-width="2.0"/>
<circle cx="1595.45" cy="979.85" r="3.05" fill="none" stroke="#a9a9a7" stroke-width="2.0"/>
<text x="1605.90" y="983.4" font-family="Liberation Sans" font-size="26" font-weight="normal" fill="#a9a9a7" textLength="19.72" lengthAdjust="spacingAndGlyphs"  stroke="#a9a9a7" stroke-width="0.3">D</text>
<path d="M1607,1010.5 L1621,1010.5 L1628,1018.5 L1621,1026.5 L1607,1026.5 Z M1611.5,1014 L1618.5,1023 M1618.5,1014 L1611.5,1023" stroke="#a9a9a7" stroke-width="2" fill="none" stroke-linecap="round" stroke-linejoin="round" />
<line x1="1167" y1="1050.6" x2="1631" y2="1050.6" stroke="#c6c6c3" stroke-width="2"/>
<text x="1166.91" y="1093" font-family="Liberation Sans" font-size="26.5" font-weight="normal" fill="#1d1d1d" textLength="158.62" lengthAdjust="spacingAndGlyphs"  stroke="#1d1d1d" stroke-width="0.3">Bring to front</text>
<text x="1166.98" y="1138" font-family="Liberation Sans" font-size="26.5" font-weight="normal" fill="#1d1d1d" textLength="157.25" lengthAdjust="spacingAndGlyphs"  stroke="#1d1d1d" stroke-width="0.3">Send to back</text>
<line x1="1167" y1="1160.6" x2="1631" y2="1160.6" stroke="#c6c6c3" stroke-width="2"/>
<rect x="1149" y="1172.3" width="499" height="43" rx="8" fill="#c8c7c4" />
<text x="1166.96" y="1204.2" font-family="Liberation Sans" font-size="26.5" font-weight="normal" fill="#1d1d1d" textLength="84.29" lengthAdjust="spacingAndGlyphs"  stroke="#1d1d1d" stroke-width="0.3">Extract</text>
<path d="M1618,1186.5 L1627,1195 L1618,1203.5" stroke="#1d1d1d" stroke-width="3" fill="none" stroke-linecap="round" stroke-linejoin="round" />
<line x1="1167" y1="1226.8" x2="1631" y2="1226.8" stroke="#c6c6c3" stroke-width="2"/>
<text x="1166.97" y="1269.2" font-family="Liberation Sans" font-size="26.5" font-weight="normal" fill="#1d1d1d" textLength="369.59" lengthAdjust="spacingAndGlyphs"  stroke="#1d1d1d" stroke-width="0.3">Show/Hide instance properties</text>
<line x1="1167" y1="1293" x2="1631" y2="1293" stroke="#c6c6c3" stroke-width="2"/>
<text x="1166.99" y="1335.9" font-family="Liberation Sans" font-size="26.5" font-weight="normal" fill="#1d1d1d" textLength="231.27" lengthAdjust="spacingAndGlyphs"  stroke="#1d1d1d" stroke-width="0.3">Open scene events</text>
<text x="1166.97" y="1379.6" font-family="Liberation Sans" font-size="26.5" font-weight="normal" fill="#1d1d1d" textLength="275.48" lengthAdjust="spacingAndGlyphs"  stroke="#1d1d1d" stroke-width="0.3">Open scene properties</text>
<rect x="1648.5" y="1166" width="399" height="108" rx="12" fill="#000" fill-opacity="0.3" filter="url(#msh)"/>
<rect x="1648.5" y="1162" width="399" height="108" rx="12" fill="#e0e0dc" />
<rect x="1659" y="1172" width="378" height="43.5" rx="8" fill="#4291fa" />
<text x="1675.93" y="1204" font-family="Liberation Sans" font-size="26.5" font-weight="normal" fill="#ffffff" textLength="321.81" lengthAdjust="spacingAndGlyphs"  stroke="#ffffff" stroke-width="0.3">Extract as a custom object</text>
<text x="1675.96" y="1247.9" font-family="Liberation Sans" font-size="26.5" font-weight="normal" fill="#1d1d1d" textLength="341.09" lengthAdjust="spacingAndGlyphs"  stroke="#1d1d1d" stroke-width="0.3">Extract as an external layout</text>
</svg>
</body></html>
